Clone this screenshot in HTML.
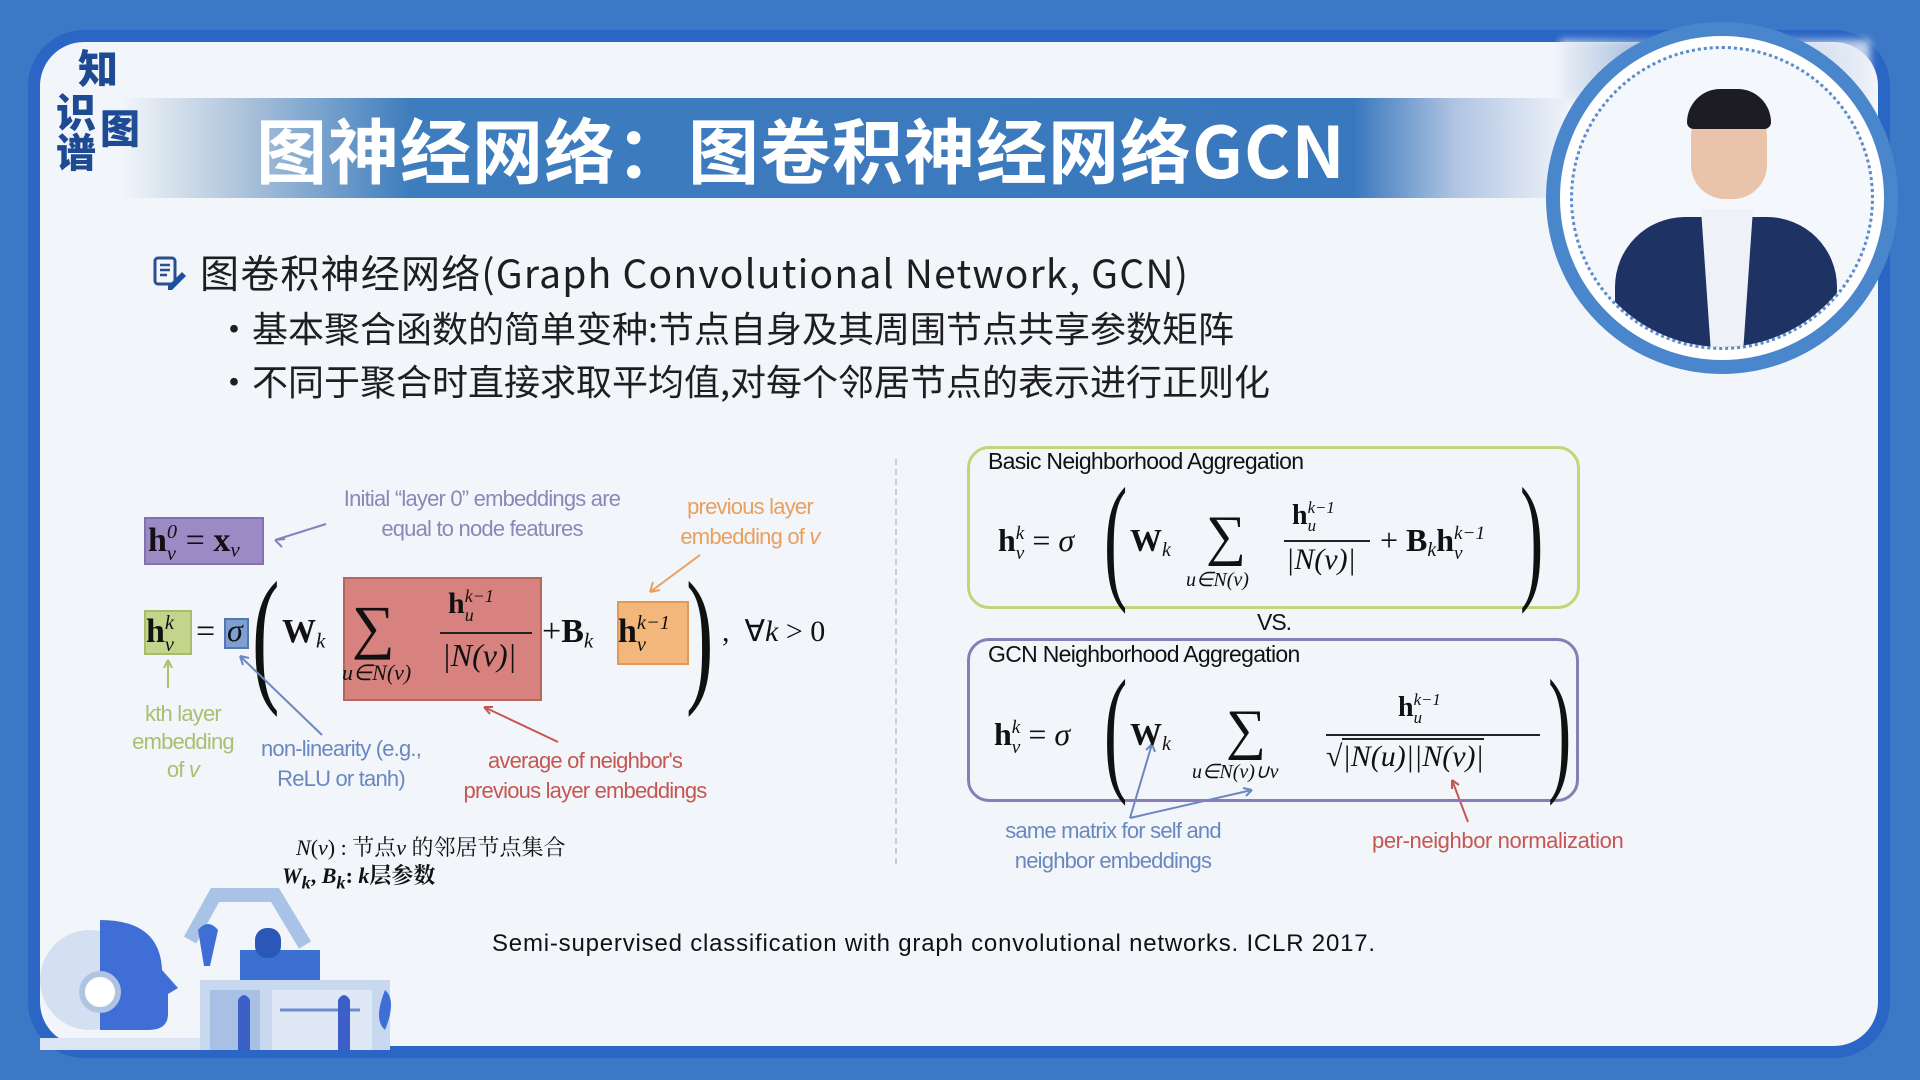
<!DOCTYPE html>
<html><head><meta charset="utf-8"><style>
*{margin:0;padding:0;box-sizing:border-box}
body{width:1920px;height:1080px;overflow:hidden;background:#3d78c6;position:relative;font-family:"Liberation Sans","Noto Sans CJK SC",sans-serif}
.a{position:absolute;white-space:nowrap}
.card{position:absolute;left:28px;top:30px;width:1862px;height:1028px;border:12px solid #2b66c4;border-radius:56px;background:#f2f5fa;overflow:hidden}
.band{position:absolute;left:122px;top:98px;width:1450px;height:100px;background:linear-gradient(90deg,rgba(59,120,189,0) 0%,rgba(110,150,190,.5) 8%,#3d7cbd 20%,#3a78bd 85%,rgba(160,185,220,.8) 92%,rgba(242,245,250,0) 100%)}
.title{left:256px;top:100px;font-family:"Noto Sans CJK SC",sans-serif;font-weight:bold;font-size:71px;color:#fff;line-height:96px;letter-spacing:1px}
.cjk{font-family:"Noto Sans CJK SC",sans-serif;color:#1e1e1e}
.m{font-family:"Liberation Serif",serif;color:#111}
.i{font-style:italic}
.ann{font-family:"Liberation Sans",sans-serif;font-size:22px;letter-spacing:-0.8px;line-height:30px;text-align:center}
.ss{display:inline-block;vertical-align:-0.42em;font-size:60%;line-height:1.05;font-style:italic;text-align:left;font-weight:normal}
.ss span{display:block}
.sb{font-size:62%;font-style:italic;vertical-align:-0.25em;font-weight:normal}
.box{position:absolute;border-radius:22px;border:3px solid}
</style></head><body>
<div class="card"></div>
<div class="a" style="left:78px;top:46px;font-family:'Noto Sans CJK SC';font-weight:900;font-size:40px;color:#1d4a93;line-height:40px">知</div>
<div class="a" style="left:56px;top:90px;font-family:'Noto Sans CJK SC';font-weight:900;font-size:40px;color:#1d4a93;line-height:40px">识</div>
<div class="a" style="left:56px;top:130px;font-family:'Noto Sans CJK SC';font-weight:900;font-size:40px;color:#1d4a93;line-height:40px">谱</div>
<div class="a" style="left:100px;top:106px;font-family:'Noto Sans CJK SC';font-weight:900;font-size:40px;color:#1d4a93;line-height:40px">图</div>
<div class="band"></div>
<div class="a title">图神经网络：图卷积神经网络GCN</div>
<div class="a" style="left:1560px;top:40px;width:310px;height:60px;background:linear-gradient(90deg,#e8eef7,#6a92c6 40%,#b0c6e2 60%,#e8eef7);filter:blur(4px);opacity:.8"></div>
<div class="a" style="left:1546px;top:22px;width:352px;height:352px;border-radius:50%;background:#fff;border:14px solid #4a86cc"></div>
<div class="a" style="left:1570px;top:46px;width:304px;height:304px;border-radius:50%;border:3px dotted #5c8bc9;background:#f4f7fc;overflow:hidden">
<div style="position:absolute;left:118px;top:50px;width:76px;height:100px;border-radius:38px 38px 34px 34px;background:#e9c4aa"></div>
<div style="position:absolute;left:114px;top:40px;width:84px;height:40px;border-radius:40px 40px 8px 8px;background:#1c1c22"></div>
<div style="position:absolute;left:42px;top:168px;width:222px;height:160px;border-radius:70px 70px 0 0;background:#1e3264"></div>
<div style="position:absolute;left:128px;top:160px;width:52px;height:150px;background:#eef1f7;clip-path:polygon(0 0,100% 0,80% 100%,20% 100%)"></div>
</div>
<svg class="a" style="left:152px;top:256px" width="36" height="36" viewBox="0 0 36 36"><rect x="3" y="2" width="20" height="26" rx="3" fill="none" stroke="#2a4e8e" stroke-width="3"/><path d="M8 9h10M8 14h10M8 19h7" stroke="#2a4e8e" stroke-width="2.5"/><path d="M16 30l14-14 4 4-14 14h-4z" fill="#1e4f9e"/></svg>
<div class="a cjk" style="left:200px;top:248px;font-size:39px;line-height:48px;letter-spacing:1.2px">图卷积神经网络(Graph Convolutional Network, GCN)</div>
<div class="a cjk" style="left:216px;top:304px;font-size:36px;line-height:46px;letter-spacing:0px">•基本聚合函数的简单变种:节点自身及其周围节点共享参数矩阵</div>
<div class="a cjk" style="left:216px;top:357px;font-size:36px;line-height:46px;letter-spacing:0px">•不同于聚合时直接求取平均值,对每个邻居节点的表示进行正则化</div>
<div class="a" style="left:895px;top:459px;height:405px;border-left:2px dashed #c8cdd6"></div>
<div class="a" style="left:144px;top:517px;width:120px;height:48px;background:#9c8ac4;border:2px solid #8270b0"></div>
<div class="a m" style="left:148px;top:518px;font-size:34px;line-height:46px"><b>h</b><span class="ss"><span>0</span><span>v</span></span> = <b>x</b><span class="sb">v</span></div>
<div class="a" style="left:144px;top:610px;width:48px;height:45px;background:#c3d48d;border:2px solid #a6bd6a"></div>
<div class="a" style="left:224px;top:618px;width:25px;height:31px;background:#7f9fd2;border:2px solid #5577b0"></div>
<div class="a" style="left:343px;top:577px;width:199px;height:124px;background:#d8827f;border:2px solid #b86560"></div>
<div class="a" style="left:617px;top:601px;width:72px;height:64px;background:#f4b77b;border:2px solid #e09a55"></div>
<div class="a m" style="left:146px;top:608px;font-size:34px;line-height:48px"><b>h</b><span class="ss"><span>k</span><span>v</span></span></div>
<div class="a m" style="left:196px;top:608px;font-size:34px;line-height:48px">=</div>
<div class="a m i" style="left:227px;top:610px;font-size:32px;line-height:40px">σ</div>
<div class="a m" style="left:252px;top:560px;font-size:150px;line-height:150px;transform:scaleX(.55);transform-origin:left">(</div>
<div class="a m" style="left:686px;top:560px;font-size:150px;line-height:150px;transform:scaleX(.55);transform-origin:left">)</div>
<div class="a m" style="left:282px;top:608px;font-size:34px;line-height:48px"><b>W</b><span class="sb">k</span></div>
<div class="a m" style="left:352px;top:592px;font-size:60px;line-height:70px">∑</div>
<div class="a m i" style="left:342px;top:658px;font-size:22px;line-height:30px">u∈N(v)</div>
<div class="a m" style="left:448px;top:584px;font-size:30px;line-height:40px"><b>h</b><span class="ss"><span>k−1</span><span>u</span></span></div>
<div class="a" style="left:440px;top:632px;width:92px;border-top:2px solid #222"></div>
<div class="a m i" style="left:442px;top:634px;font-size:32px;line-height:42px">|N(v)|</div>
<div class="a m" style="left:542px;top:608px;font-size:34px;line-height:48px">+<b>B</b><span class="sb">k</span></div>
<div class="a m" style="left:618px;top:608px;font-size:34px;line-height:48px"><b>h</b><span class="ss"><span>k−1</span><span>v</span></span></div>
<div class="a m" style="left:722px;top:608px;font-size:30px;line-height:48px">, &nbsp;∀<i>k</i> &gt; 0</div>
<div class="a ann" style="left:316px;top:484px;color:#8f86b8;width:332px">Initial “layer 0” embeddings are<br>equal to node features</div>
<div class="a ann" style="left:660px;top:492px;color:#e8a05e;width:180px">previous layer<br>embedding of <i>v</i></div>
<div class="a ann" style="left:118px;top:700px;color:#a9c070;width:130px;line-height:28px">kth layer<br>embedding<br>of <i>v</i></div>
<div class="a ann" style="left:246px;top:734px;color:#6a88c0;width:190px">non-linearity (e.g.,<br>ReLU or tanh)</div>
<div class="a ann" style="left:440px;top:746px;color:#c55753;width:290px">average of neighbor's<br>previous layer embeddings</div>
<svg class="a" style="left:0;top:0" width="1920" height="1080">
<g stroke-width="2" fill="none">
<path d="M326 524L275 540M275 540l10-1M275 540l7 7" stroke="#8a80b6"/>
<path d="M700 555L650 592M650 592l3-10M650 592l10-2" stroke="#e8a05e"/>
<path d="M168 688V660M168 660l-4 8M168 660l4 8" stroke="#a9c070"/>
<path d="M322 735L240 656M240 656l3 9M240 656l9 2" stroke="#6a88c0"/>
<path d="M558 742L484 707M484 707l6 7M484 707l9 0" stroke="#c55753"/>
<path d="M1130 818L1152 744M1152 744l-6 6M1152 744l3 8M1130 818L1252 790M1252 790l-9-2M1252 790l-6 6" stroke="#6a88c0"/>
<path d="M1468 822L1452 780M1452 780l0 9M1452 780l7 5" stroke="#c55753"/>
</g></svg>
<div class="a" style="left:296px;top:832px;font-size:22px;line-height:32px;font-family:'Liberation Serif','Noto Serif CJK SC',serif;color:#111"><i>N</i>(<i>v</i>) : 节点<i>v</i> 的邻居节点集合</div>
<div class="a" style="left:282px;top:860px;font-size:22px;line-height:32px;font-family:'Liberation Serif','Noto Serif CJK SC',serif;color:#111;font-weight:bold"><i>W<sub>k</sub></i>, <i>B<sub>k</sub></i>: <i>k</i>层参数</div>
<div class="box" style="left:967px;top:446px;width:613px;height:163px;border-color:#c6d27c"></div>
<div class="a" style="left:988px;top:446px;font-size:23px;line-height:30px;letter-spacing:-0.7px;color:#111">Basic Neighborhood Aggregation</div>
<div class="a m" style="left:998px;top:516px;font-size:32px;line-height:48px"><b>h</b><span class="ss"><span>k</span><span>v</span></span> = <i>σ</i></div>
<div class="a m" style="left:1104px;top:468px;font-size:140px;line-height:140px;transform:scaleX(.5);transform-origin:left">(</div>
<div class="a m" style="left:1520px;top:468px;font-size:140px;line-height:140px;transform:scaleX(.5);transform-origin:left">)</div>
<div class="a m" style="left:1130px;top:516px;font-size:32px;line-height:48px"><b>W</b><span class="sb">k</span></div>
<div class="a m" style="left:1206px;top:504px;font-size:56px;line-height:64px">∑</div>
<div class="a m i" style="left:1186px;top:566px;font-size:20px;line-height:28px">u∈N(v)</div>
<div class="a m" style="left:1292px;top:498px;font-size:28px;line-height:36px"><b>h</b><span class="ss"><span>k−1</span><span>u</span></span></div>
<div class="a" style="left:1284px;top:540px;width:86px;border-top:2px solid #222"></div>
<div class="a m i" style="left:1286px;top:540px;font-size:30px;line-height:40px">|N(v)|</div>
<div class="a m" style="left:1380px;top:516px;font-size:32px;line-height:48px">+ <b>B</b><span class="sb">k</span><b>h</b><span class="ss"><span>k−1</span><span>v</span></span></div>
<div class="a" style="left:1257px;top:608px;font-size:23px;line-height:28px;letter-spacing:-1px;color:#111">VS.</div>
<div class="box" style="left:967px;top:638px;width:612px;height:164px;border-color:#8a7cb6"></div>
<div class="a" style="left:988px;top:639px;font-size:23px;line-height:30px;letter-spacing:-0.7px;color:#111">GCN Neighborhood Aggregation</div>
<div class="a m" style="left:994px;top:710px;font-size:32px;line-height:48px"><b>h</b><span class="ss"><span>k</span><span>v</span></span> = <i>σ</i></div>
<div class="a m" style="left:1104px;top:660px;font-size:140px;line-height:140px;transform:scaleX(.5);transform-origin:left">(</div>
<div class="a m" style="left:1548px;top:660px;font-size:140px;line-height:140px;transform:scaleX(.5);transform-origin:left">)</div>
<div class="a m" style="left:1130px;top:710px;font-size:32px;line-height:48px"><b>W</b><span class="sb">k</span></div>
<div class="a m" style="left:1226px;top:698px;font-size:56px;line-height:64px">∑</div>
<div class="a m i" style="left:1192px;top:758px;font-size:20px;line-height:28px">u∈N(v)∪v</div>
<div class="a m" style="left:1398px;top:690px;font-size:28px;line-height:36px"><b>h</b><span class="ss"><span>k−1</span><span>u</span></span></div>
<div class="a" style="left:1326px;top:734px;width:214px;border-top:2px solid #222"></div>
<div class="a m i" style="left:1326px;top:736px;font-size:30px;line-height:42px">√<span style="border-top:2px solid #222">|N(u)||N(v)|</span></div>
<div class="a ann" style="left:976px;top:816px;color:#6a88c0;width:274px">same matrix for self and<br>neighbor embeddings</div>
<div class="a ann" style="left:1372px;top:826px;color:#c55753;letter-spacing:-0.4px">per-neighbor normalization</div>
<div class="a" style="left:492px;top:929px;font-size:24px;line-height:30px;color:#111;letter-spacing:0.8px">Semi-supervised classification with graph convolutional networks. ICLR 2017.</div>
<svg class="a" style="left:40px;top:850px" width="360" height="200" viewBox="0 0 360 200">
<path d="M150 90L175 45h60l30 50" stroke="#a9c3e6" stroke-width="14" fill="none"/>
<circle cx="50" cy="130" r="50" fill="#d4e0f1"/>
<path d="M60 70q60 0 62 50l16 18-10 6 0 20q0 16-20 16H60z" fill="#3f6fd6"/>
<circle cx="60" cy="142" r="18" fill="#fff" stroke="#b0c4e2" stroke-width="6"/>
<rect x="200" y="100" width="80" height="40" fill="#3b6fd0"/>
<rect x="215" y="78" width="26" height="30" rx="12" fill="#2b57b8"/>
<rect x="160" y="130" width="190" height="70" fill="#c8d8ee"/>
<rect x="170" y="140" width="50" height="60" fill="#a8c0e4"/>
<rect x="232" y="140" width="100" height="60" fill="#dfe8f5"/>
<path d="M240 160h80" stroke="#6a8cd0" stroke-width="3"/>
<path d="M198 150q6-10 12 0v50h-12z" fill="#3b5fc6"/>
<path d="M298 150q6-10 12 0v50h-12z" fill="#3b5fc6"/>
<path d="M158 80q10-12 20 0l-8 36h-6z" fill="#3f6fd6"/>
<path d="M345 140q12 10 0 40q-12-10 0-40z" fill="#3f6fd6"/>
<rect x="0" y="188" width="160" height="12" fill="#dbe5f3"/>
</svg>
</body></html>
